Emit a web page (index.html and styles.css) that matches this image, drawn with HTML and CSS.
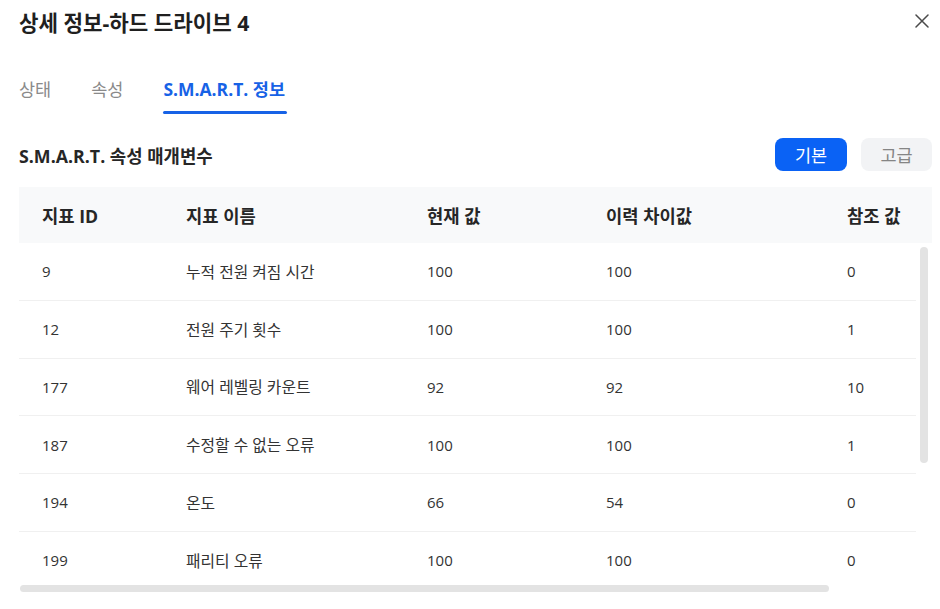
FILE: index.html
```html
<!DOCTYPE html>
<html lang="ko">
<head>
<meta charset="utf-8">
<title>상세 정보-하드 드라이브 4</title>
<link rel="stylesheet" href="styles.css">
</head>
<body>
<div class="dialog">
  <div class="dialog-head">
    <h1 class="title">상세 정보-하드 드라이브 4</h1>
    <button class="close" aria-label="닫기">
      <svg width="14" height="14" viewBox="0 0 14 14"><path d="M1 1L13 13M13 1L1 13" stroke="#4a4a4a" stroke-width="1.5" fill="none" stroke-linecap="round"/></svg>
    </button>
  </div>
  <div class="tabs">
    <div class="tab">상태</div>
    <div class="tab">속성</div>
    <div class="tab active">S.M.A.R.T. 정보</div>
  </div>
  <div class="section-head">
    <h2 class="section-title">S.M.A.R.T. 속성 매개변수</h2>
    <div class="toggle">
      <button class="btn btn-primary">기본</button>
      <button class="btn btn-light">고급</button>
    </div>
  </div>
  <div class="table-wrap">
    <div class="row head">
      <div>지표 ID</div><div>지표 이름</div><div>현재 값</div><div>이력 차이값</div><div>참조 값</div>
    </div>
    <div class="body">
      <div class="row"><div>9</div><div class="name">누적 전원 켜짐 시간</div><div>100</div><div>100</div><div>0</div></div>
      <div class="row"><div>12</div><div class="name">전원 주기 횟수</div><div>100</div><div>100</div><div>1</div></div>
      <div class="row"><div>177</div><div class="name">웨어 레벨링 카운트</div><div>92</div><div>92</div><div>10</div></div>
      <div class="row"><div>187</div><div class="name">수정할 수 없는 오류</div><div>100</div><div>100</div><div>1</div></div>
      <div class="row"><div>194</div><div class="name">온도</div><div>66</div><div>54</div><div>0</div></div>
      <div class="row"><div>199</div><div class="name">패리티 오류</div><div>100</div><div>100</div><div>0</div></div>
    </div>
    <div class="vscroll"></div>
    <div class="hscroll"></div>
  </div>
</div>
</body>
</html>
```
FILE: styles.css
```css
* { box-sizing: border-box; }
html, body { margin: 0; padding: 0; background: #fff; }
body {
  font-family: "Open Sans", "Noto Sans CJK KR", sans-serif;
  color: #333;
  width: 940px;
  height: 609px;
  overflow: hidden;
}
.dialog { padding: 0 8px 0 19px; }
.dialog-head {
  height: 42px;
  display: flex;
  align-items: center;
  justify-content: space-between;
}
.title {
  margin: 0;
  font-size: 21.2px;
  font-weight: 700;
  color: #1f1f1f;
}
.close {
  border: 0;
  background: none;
  padding: 0;
  width: 14px;
  height: 14px;
  margin-right: 3px;
  display: flex;
}
.tabs {
  display: flex;
  gap: 40px;
  margin-top: 30px;
  height: 42px;
}
.tab {
  font-size: 17.5px;
  color: #8a8a8a;
  line-height: 22px;
  padding-top: 6px;
  position: relative;
}
.tab.active {
  color: #1762e6;
  font-weight: 700;
}
.tab.active::after {
  content: "";
  position: absolute;
  left: 0;
  right: -2px;
  top: 39px;
  height: 3px;
  border-radius: 2px;
  background: #1762e6;
}
.section-head {
  display: flex;
  align-items: center;
  justify-content: space-between;
  margin-top: 24px;
  height: 33px;
}
.section-title {
  margin: 0;
  font-size: 17.8px;
  font-weight: 700;
  color: #262626;
}
.toggle { display: flex; gap: 14px; }
.btn {
  width: 72px;
  height: 33px;
  border: 0;
  border-radius: 8px;
  font-family: "Open Sans", "Noto Sans CJK KR", sans-serif;
  font-size: 17.5px;
  padding: 0;
}
.btn-primary { background: #0a62f5; color: #fff; }
.btn-light { background: #f2f3f5; color: #858585; width: 71px; }
.table-wrap {
  position: relative;
  margin-top: 16px;
  width: 913px;
  height: 406px;
}
.row {
  display: grid;
  grid-template-columns: 144px 241px 179px 241px 1fr;
  padding-left: 23px;
  align-items: center;
}
.row.head {
  background: #f8f9fa;
  height: 56px;
  font-size: 17.7px;
  font-weight: 700;
  color: #262626;
}
.body {
  width: 897px;
  height: 340px;
  overflow: hidden;
}
.body .row {
  height: 57.75px;
  border-bottom: 1px solid #f0f0f0;
  font-size: 15px;
  color: #333;
}
.body .name { font-size: 15.8px; }
.vscroll {
  position: absolute;
  left: 901px;
  top: 60px;
  width: 8px;
  height: 216px;
  border-radius: 4px;
  background: #e3e3e3;
}
.hscroll {
  position: absolute;
  left: 1px;
  top: 398px;
  width: 809px;
  height: 7px;
  border-radius: 4px;
  background: #e3e3e3;
}
```
